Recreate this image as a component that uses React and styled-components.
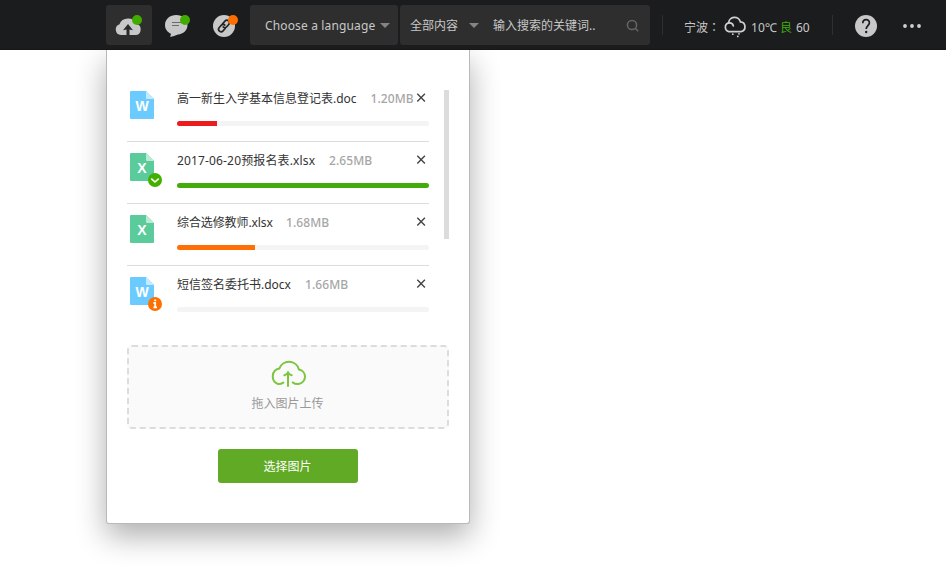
import React from "react";
import styled, { createGlobalStyle } from "styled-components";

const Global = createGlobalStyle`
  * { box-sizing: border-box; }
  body {
    margin: 0;
    background: #fff;
    font: 12px/18px "Noto Sans", "Noto Sans CJK SC", sans-serif;
  }
  svg { display: block; flex: none; }
`;

const Page = styled.div`
  height: 100vh;
  overflow: hidden;
`;
const Header = styled.header`
  display: flex;
  align-items: center;
  position: relative;
  height: 50px;
  padding-left: 106px;
  background: #1b1c1e;
  border-bottom: 1px solid #181616;
  color: #c8c8c8;
  white-space: nowrap;
`;
const IconTile = styled.button`
  width: 46px;
  height: 40px;
  margin: 1px 2px 0 0;
  padding: 0;
  border: 0;
  border-radius: 3px;
  background: ${(p) => (p.$active ? "#2e2e2e" : "transparent")};
`;
const LanguageSelect = styled.div`
  display: flex;
  align-items: center;
  width: 148px;
  height: 40px;
  margin: 1px 2px 0 0;
  padding: 1px 8px 0 15px;
  border-radius: 3px;
  background: #2e2e2e;
`;
const SearchBox = styled(LanguageSelect)`
  width: 250px;
  margin-right: 12px;
  padding: 1px 11px 0 10px;
`;
const Label = styled.span`
  flex: none;
  width: ${(p) => p.$width}px;
  letter-spacing: ${(p) => p.$spacing || 0}px;
`;
const City = styled(Label)`
  font-family: "Noto Sans", "Noto Sans CJK TC", sans-serif;
`;
const Caret = styled.i`
  flex: none;
  margin-right: ${(p) => p.$gap || 0}px;
  border: 5px solid transparent;
  border-top-color: #848484;
  border-bottom: 0;
`;
const Divider = styled.i`
  width: 1px;
  height: 20px;
  background: #2e2f30;
`;
const Weather = styled.div`
  display: flex;
  align-items: center;
  width: 169px;
  padding: 7px 0 0 21px;
`;
const AirQuality = styled.span`
  width: 16px;
  color: #3fae00;
`;
const Actions = styled.div`
  display: flex;
  align-items: center;
  gap: 26px;
  padding: 3px 0 0 22px;
`;

const Panel = styled.section`
  width: 364px;
  height: 474px;
  margin-left: 106px;
  padding: 30px 20px 0;
  border: 1px solid #b9b9b9;
  border-top: 0;
  border-radius: 0 0 3px 3px;
  background: #fff;
  box-shadow: 0 12px 30px rgba(0, 0, 0, 0.32);
`;
const ListArea = styled.div`
  display: flex;
  justify-content: space-between;
  height: 265px;
`;
const FileList = styled.ul`
  width: 302px;
  margin: 0;
  padding: 0;
  list-style: none;
`;
const ScrollThumb = styled.div`
  width: 5px;
  height: 149px;
  margin-top: 10px;
  background: #dcdcdc;
`;
const FileItem = styled.li`
  display: flex;
  height: 62px;
  padding: 10px 0 0 3px;
  border-bottom: 1px solid #dcdcdc;
  &:last-child { border-bottom: 0; }
`;
const FileBody = styled.div`
  width: 252px;
  margin-left: 13px;
`;
const FileTitle = styled.div`
  display: flex;
  align-items: center;
  height: 18px;
  white-space: nowrap;
  color: #333;
`;
const FileName = styled.span`
  flex: none;
  width: ${(p) => p.$width}px;
  letter-spacing: ${(p) => p.$spacing || 0}px;
`;
const FileSize = styled.span`
  color: #a6a6a6;
  font-weight: 500;
  letter-spacing: 0.1px;
`;
const Remove = styled.button`
  margin: 0 3px 2px auto;
  padding: 0;
  border: 0;
  background: none;
`;
const Track = styled.div`
  height: 5px;
  margin-top: 13px;
  border-radius: 2.5px;
  background: #f4f4f4;
  overflow: hidden;
`;
const Fill = styled.div`
  height: 5px;
  background: ${(p) => p.$color};
`;
const DropZone = styled.div`
  display: flex;
  flex-direction: column;
  align-items: center;
  height: 84px;
  padding: 11px 1px 0 0;
  border: 2px dashed #dcdcdc;
  border-radius: 5px;
  background: #fafafa;
  color: #999;
`;
const DropText = styled.span`
  margin-top: 7px;
`;
const ChooseButton = styled.button`
  display: block;
  width: 140px;
  height: 34px;
  margin: 20px 0 0 91px;
  padding: 2px 1px 0 0;
  border: 0;
  border-radius: 3px;
  background: #61aa25;
  color: #fff;
  font: inherit;
`;
const Glyph = styled.text`
  font-family: "Liberation Sans", sans-serif;
  font-weight: ${(p) => p.$weight || 700};
  font-size: ${(p) => p.$size}px;
  text-anchor: middle;
`;

const FILES = [
  { name: "高一新生入学基本信息登记表.doc", nameWidth: 193.5, size: "1.20MB", type: "W", progress: 40, color: "#ec1c1c" },
  { name: "2017-06-20预报名表.xlsx", nameWidth: 152, spacing: 0.15, size: "2.65MB", type: "X", progress: 252, color: "#43ab0a", status: "done" },
  { name: "综合选修教师.xlsx", nameWidth: 109, spacing: -0.1, size: "1.68MB", type: "X", progress: 78, color: "#ff6f06" },
  { name: "短信签名委托书.docx", nameWidth: 128, size: "1.66MB", type: "W", progress: 0, color: "#ff6f06", status: "error" },
];

function FileIcon({ type, status }) {
  const word = type === "W";
  return (
    <svg width="34" height="38" viewBox="0 0 34 38">
      <path d="M1 1H16L24 9V28a1 1 0 0 1-1 1H1a1 1 0 0 1-1-1V2a1 1 0 0 1 1-1Z" fill={word ? "#6bcbff" : "#5acb9a"} />
      <path d="M16 1L24 9H17a1 1 0 0 1-1-1Z" fill={word ? "#c4eaff" : "#bdead7"} />
      <Glyph x="12" y="21" $size={14} fill="#fff">{type}</Glyph>
      {status && <circle cx="25" cy="28" r="7" fill={status === "done" ? "#43b000" : "#ff6f00"} />}
      {status === "done" && <path d="M21.3 26.6L25 30L28.7 26.6" fill="none" stroke="#fff" strokeWidth="1.6" />}
      {status === "error" && (
        <path d="M23.4 27H25.2V31M23.4 31.4H27M24.2 24.4H26.2" fill="none" stroke="#fff" strokeWidth="1.8" />
      )}
    </svg>
  );
}

const UploadIcon = () => (
  <svg width="46" height="40">
    <path d="M15 30A5.5 5.5 0 0 1 13.5 19.3A9 8.5 0 0 1 30.5 19A5.6 5.6 0 0 1 29.5 30Z" fill="#c8c8c8" />
    <path d="M22 19L27 25.3L23.5 24.6V30H20.5V24.6L17 25.3Z" fill="#2a2a2a" />
    <circle cx="31" cy="15" r="5" fill="#42ab00" />
  </svg>
);
const MessageIcon = () => (
  <svg width="46" height="40">
    <path d="M22.2 10C28.5 10 33.5 14 33.5 20C33.5 25.5 29 29 24 29.6Q20 31.3 16.2 32L17 28.8C13.5 27.2 11 24.2 11 20C11 14 16 10 22.2 10Z" fill="#c8c8c8" />
    <path d="M18 17.5H27M18 20.5H25" stroke="#6b6b6b" strokeWidth="1.1" />
    <circle cx="31" cy="15" r="5" fill="#42ab00" />
  </svg>
);
const LinkIcon = () => (
  <svg width="46" height="40">
    <circle cx="22" cy="21" r="11" fill="#c8c8c8" />
    <g transform="translate(22 21) rotate(-48) scale(1.06)" fill="none" stroke="#222" strokeWidth="1.6" strokeLinecap="round">
      <path d="M1-2.4H4A2.4 2.4 0 0 1 4 2.4H1.2A2.4 2.4 0 0 1-1.2 0" />
      <path d="M-1 2.4H-4A2.4 2.4 0 0 1-4-2.4H-1.2A2.4 2.4 0 0 1 1.2 0" />
    </g>
    <circle cx="31" cy="15" r="5" fill="#ff6c00" />
  </svg>
);
const SearchIcon = () => (
  <svg width="14" height="14" fill="none" stroke="#666" strokeWidth="1.5">
    <circle cx="6" cy="6" r="4.6" />
    <path d="M9.3 9.3L12.2 12.2" />
  </svg>
);
const RainIcon = () => (
  <svg width="24" height="24" viewBox="0 0 24 24" fill="none" stroke="#d0d0d0" strokeWidth="1.7" strokeLinecap="round">
    <path d="M4.8 15.6A4.5 4.5 0 0 1 4.6 6.9A6 6 0 0 1 16.4 5.9A4.9 4.9 0 0 1 17 15.6Z" />
    <path d="M4.6 6.9Q8.6 6.4 9.3 9.8" />
    <g fill="#d0d0d0" stroke="none">
      <circle cx="8.8" cy="18.2" r="0.9" />
      <circle cx="15" cy="17.8" r="0.9" />
      <circle cx="13.8" cy="20.4" r="0.9" />
    </g>
  </svg>
);
const HelpIcon = () => (
  <svg width="22" height="22">
    <circle cx="11" cy="11" r="11" fill="#c8c8c8" />
    <path d="M7.8 8.2C7.8 3.5 14.4 3.6 14.4 7.8C14.4 10.5 11.2 10.7 11.2 14" fill="none" stroke="#1b1c1e" strokeWidth="1.7" />
    <circle cx="11.2" cy="17" r="1.2" fill="#1b1c1e" />
  </svg>
);
const MoreIcon = () => (
  <svg width="18" height="4" fill="#d0d0d0">
    <circle cx="2" cy="2" r="1.9" />
    <circle cx="9" cy="2" r="1.9" />
    <circle cx="16" cy="2" r="1.9" />
  </svg>
);
const CloudUploadIcon = () => (
  <svg width="36" height="30" fill="none" stroke="#7cc53e" strokeWidth="2" strokeLinecap="round">
    <path d="M13.3 24.6C11.5 25.8 9.8 26.2 8 26A7.9 8 0 0 1 9.3 10.6A10.3 10.3 0 0 1 28.9 11.4A7.5 7.4 0 0 1 28.5 26C26.5 26.2 24.5 25.8 22.8 24.4" />
    <path d="M18 28V15M14.3 17.2C16 16.8 17.2 16 18 14.5C18.8 16 20 16.8 21.7 17.2" />
  </svg>
);
const CloseIcon = () => (
  <svg width="10" height="10" stroke="#444" strokeWidth="1.4">
    <path d="M1.3 0.8L8.9 8.4M8.9 0.8L1.3 8.4" />
  </svg>
);

export default function App() {
  return (
    <Page>
      <Global />
      <Header>
        <IconTile $active><UploadIcon /></IconTile>
        <IconTile><MessageIcon /></IconTile>
        <IconTile><LinkIcon /></IconTile>
        <LanguageSelect>
          <Label $width={114.5} $spacing={0.14}>Choose a language</Label>
          <Caret />
        </LanguageSelect>
        <SearchBox>
          <Label $width={59}>全部内容</Label>
          <Caret $gap={14} />
          <Label $width={133}>输入搜索的关键词..</Label>
          <SearchIcon />
        </SearchBox>
        <Divider />
        <Weather>
          <City $width={40}>宁波：</City>
          <RainIcon />
          <Label $width={32}>&nbsp;10℃</Label>
          <AirQuality>良</AirQuality>
          <span>60</span>
        </Weather>
        <Divider />
        <Actions>
          <HelpIcon />
          <MoreIcon />
        </Actions>
      </Header>
      <Panel>
        <ListArea>
          <FileList>
            {FILES.map((file) => (
              <FileItem key={file.name}>
                <FileIcon type={file.type} status={file.status} />
                <FileBody>
                  <FileTitle>
                    <FileName $width={file.nameWidth} $spacing={file.spacing}>{file.name}</FileName>
                    <FileSize>{file.size}</FileSize>
                    <Remove aria-label="删除"><CloseIcon /></Remove>
                  </FileTitle>
                  <Track>
                    <Fill $color={file.color} style={{ width: file.progress }} />
                  </Track>
                </FileBody>
              </FileItem>
            ))}
          </FileList>
          <ScrollThumb />
        </ListArea>
        <DropZone>
          <CloudUploadIcon />
          <DropText>拖入图片上传</DropText>
        </DropZone>
        <ChooseButton>选择图片</ChooseButton>
      </Panel>
    </Page>
  );
}
